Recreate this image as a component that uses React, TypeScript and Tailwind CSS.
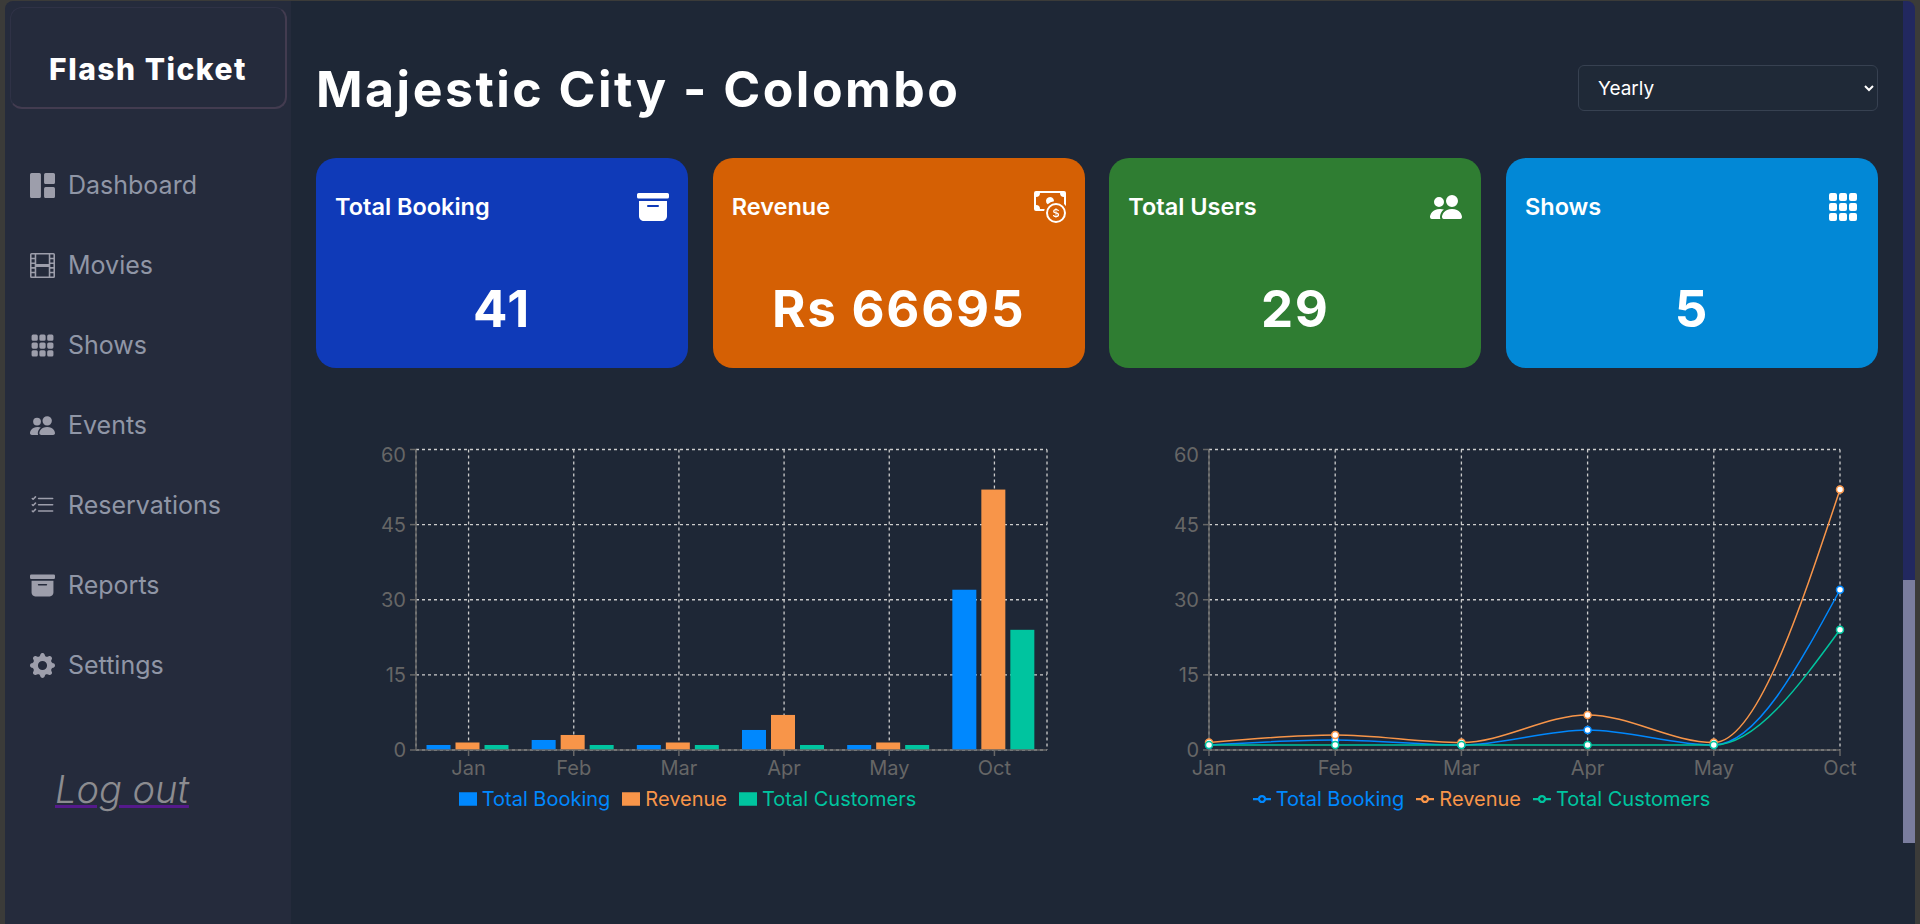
import React from "react";
import {
  BsArchiveFill,
  BsCashCoin,
  BsFilm,
  BsFillGrid1X2Fill,
  BsGearFill,
  BsGrid3X3GapFill,
  BsListCheck,
  BsPeopleFill,
} from "react-icons/bs";

const navItems = [
  { label: "Dashboard", icon: BsFillGrid1X2Fill },
  { label: "Movies", icon: BsFilm },
  { label: "Shows", icon: BsGrid3X3GapFill },
  { label: "Events", icon: BsPeopleFill },
  { label: "Reservations", icon: BsListCheck },
  { label: "Reports", icon: BsArchiveFill },
  { label: "Settings", icon: BsGearFill },
];

const cards = [
  { title: "Total Booking", value: "41", icon: BsArchiveFill, bg: "bg-[#0f3ab8]" },
  { title: "Revenue", value: "Rs 66695", icon: BsCashCoin, bg: "bg-[#d56004]" },
  { title: "Total Users", value: "29", icon: BsPeopleFill, bg: "bg-[#2f7d32]" },
  { title: "Shows", value: "5", icon: BsGrid3X3GapFill, bg: "bg-[#0288d6]" },
];

const months = ["Jan", "Feb", "Mar", "Apr", "May", "Oct"];
const series = [
  { name: "Total Booking", color: "#0088fe", text: "text-[#0088fe]", data: [1, 2, 1, 4, 1, 32] },
  { name: "Revenue", color: "#f89549", text: "text-[#f89549]", data: [1.5, 3, 1.5, 7, 1.5, 52] },
  { name: "Total Customers", color: "#00c49f", text: "text-[#00c49f]", data: [1, 1, 1, 1, 1, 24] },
];

const TOP = 19.5;
const BOTTOM = 320;
const yTicks = [60, 45, 30, 15, 0];
const yOf = (v: number) => BOTTOM - (v / 60) * (BOTTOM - TOP);

// same curve as d3 curveMonotoneX
function monotonePath(pts: [number, number][]) {
  const n = pts.length;
  const slopes: number[] = [];
  for (let i = 0; i < n - 1; i++) {
    slopes.push((pts[i + 1][1] - pts[i][1]) / (pts[i + 1][0] - pts[i][0]));
  }
  const t: number[] = new Array(n).fill(0);
  for (let i = 1; i < n - 1; i++) {
    const s0 = slopes[i - 1];
    const s1 = slopes[i];
    const p = (s0 + s1) / 2;
    t[i] = (Math.sign(s0) + Math.sign(s1)) * Math.min(Math.abs(s0), Math.abs(s1), 0.5 * Math.abs(p)) || 0;
  }
  t[0] = (3 * slopes[0] - t[1]) / 2;
  t[n - 1] = (3 * slopes[n - 2] - t[n - 2]) / 2;
  let d = `M${pts[0][0]},${pts[0][1]}`;
  for (let i = 0; i < n - 1; i++) {
    const dx = (pts[i + 1][0] - pts[i][0]) / 3;
    d += `C${pts[i][0] + dx},${pts[i][1] + dx * t[i]},${pts[i + 1][0] - dx},${pts[i + 1][1] - dx * t[i + 1]},${pts[i + 1][0]},${pts[i + 1][1]}`;
  }
  return d;
}

const GRID_STROKE = "#ccc";
const GRID_WIDTH = 1.3;

function YGrid({ left, right }: { left: number; right: number }) {
  return (
    <g>
      {yTicks.map((v) => (
        <line
          key={v}
          x1={left}
          x2={right}
          y1={yOf(v)}
          y2={yOf(v)}
          stroke={GRID_STROKE}
          strokeWidth={GRID_WIDTH}
          strokeDasharray="3 3"
        />
      ))}
    </g>
  );
}

function XGrid({ xs }: { xs: number[] }) {
  return (
    <g>
      {xs.map((x) => (
        <line
          key={x}
          x1={x}
          x2={x}
          y1={TOP}
          y2={BOTTOM}
          stroke={GRID_STROKE}
          strokeWidth={GRID_WIDTH}
          strokeDasharray="3 3"
        />
      ))}
    </g>
  );
}

function AxisLines({ left, right, xs }: { left: number; right: number; xs: number[] }) {
  return (
    <g stroke="#666" fill="#666" fontSize={20} strokeWidth={1.5}>
      <line x1={left} x2={left} y1={TOP} y2={BOTTOM} />
      <line x1={left} x2={right} y1={BOTTOM} y2={BOTTOM} />
      {yTicks.map((v) => (
        <g key={v}>
          <line x1={left - 6} x2={left} y1={yOf(v)} y2={yOf(v)} />
          <text x={left - 10} y={yOf(v) + (v === 60 ? 12 : 7)} textAnchor="end" stroke="none">
            {v}
          </text>
        </g>
      ))}
      {xs.map((x, i) => (
        <g key={months[i]}>
          <line x1={x} x2={x} y1={BOTTOM} y2={BOTTOM + 6} />
          <text x={x} y={345} textAnchor="middle" stroke="none">
            {months[i]}
          </text>
        </g>
      ))}
    </g>
  );
}

function BarPlot() {
  const left = 100;
  const right = 731;
  const band = (right - left) / 6;
  const xs = months.map((_, i) => left + band * (i + 0.5));
  return (
    <svg width={781} height={357} className="block">
      <YGrid left={left} right={right} />
      <XGrid xs={[left, ...xs, right]} />
      {series.map((s, si) =>
        s.data.map((v, i) => (
          <rect
            key={s.name + i}
            x={left + band * i + 10.5 + si * 29}
            y={yOf(v)}
            width={24}
            height={BOTTOM - yOf(v)}
            fill={s.color}
          />
        )),
      )}
      <AxisLines left={left} right={right} xs={xs} />
    </svg>
  );
}

function LinePlot() {
  const left = 112;
  const right = 743;
  const step = (right - left) / 5;
  const xs = months.map((_, i) => left + step * i);
  return (
    <svg width={781} height={357} className="block">
      <YGrid left={left} right={right} />
      <XGrid xs={xs} />
      <AxisLines left={left} right={right} xs={xs} />
      {series.map((s) => (
        <path
          key={s.name}
          d={monotonePath(s.data.map((v, i) => [xs[i], yOf(v)]))}
          fill="none"
          stroke={s.color}
          strokeWidth={1.5}
        />
      ))}
      {series.map((s) =>
        s.data.map((v, i) => (
          <circle key={s.name + i} cx={xs[i]} cy={yOf(v)} r={3.5} fill="#fff" stroke={s.color} strokeWidth={1.5} />
        )),
      )}
    </svg>
  );
}

function Legend({ line, className }: { line?: boolean; className: string }) {
  return (
    <div className={`flex h-[24px] items-center justify-center gap-[12px] text-[20px] ${className}`}>
      {series.map((s) => (
        <div key={s.name} className={`flex items-center gap-[5px] ${s.text}`}>
          <svg width={18} height={18} viewBox="0 0 32 32">
            {line ? (
              <path
                d="M0,16h10.67A5.33,5.33,0,1,1,21.33,16H32M21.33,16A5.33,5.33,0,1,1,10.67,16"
                fill="none"
                stroke={s.color}
                strokeWidth={4}
              />
            ) : (
              <path d="M0,4h32v24h-32z" fill={s.color} />
            )}
          </svg>
          <span>{s.name}</span>
        </div>
      ))}
    </div>
  );
}

export default function App() {
  return (
    <div className="h-screen w-full overflow-hidden bg-[#3b3b39] pl-[5px] pr-[5px] pt-[1px] font-[Inter,sans-serif]">
      <div className="flex h-full overflow-hidden rounded-t-lg">
        {/* Sidebar */}
        <aside className="flex w-[286px] shrink-0 flex-col bg-[#252b3c] pl-[5px] pt-[6px]">
          <div className="flex h-[102px] w-[277px] items-center justify-center rounded-xl border border-[#2f3246] border-r-2 border-b-2 border-r-[#433c50] border-b-[#433c50] pt-[24px]">
            <span className="text-[30px] font-extrabold tracking-[0.05em] text-white">Flash Ticket</span>
          </div>
          <nav className="mt-[36px] flex flex-col">
            {navItems.map((item) => (
              <div key={item.label} className="flex h-[80px] items-center gap-[13px] pl-[20px]">
                <item.icon size={25} className="text-[#9d9eab]" />
                <span className="pt-[1px] text-[25px] text-[#9096a6]">{item.label}</span>
              </div>
            ))}
          </nav>
          <a className="mt-[57px] self-start pl-[45px] text-[38px] font-light italic leading-[54px] text-[#8c8c90] underline decoration-[#551a8b] decoration-[3px]">
            Log out
          </a>
        </aside>

        {/* Main */}
        <main className="flex-1 bg-[#1e2736] px-[25px] pt-[51px]">
          <div className="flex h-[72px] items-center justify-between">
            <h1 className="mt-[3px] text-[50px] font-bold tracking-[0.05em] text-white">Majestic City - Colombo</h1>
            <select className="h-[46px] w-[300px] rounded-md border border-[#374151] bg-[#1f2937] pl-[15px] text-[19px] text-white">
              <option>Yearly</option>
            </select>
          </div>

          <div className="mt-[34px] grid grid-cols-4 gap-[24.67px]">
            {cards.map((c) => (
              <div key={c.title} className={`flex h-[210px] flex-col rounded-[20px] px-[19px] pt-[33px] text-white ${c.bg}`}>
                <div className="flex h-[32px] items-center justify-between">
                  <span className="text-[23.5px] font-semibold">{c.title}</span>
                  <c.icon size={32} />
                </div>
                <div className="mt-[54px] text-center text-[51px] font-bold leading-[64px] tracking-[0.035em]">
                  {c.value}
                </div>
              </div>
            ))}
          </div>

          <div className="mt-[62px] grid grid-cols-2">
            <div>
              <BarPlot />
              <Legend className="pr-[38px]" />
            </div>
            <div>
              <LinePlot />
              <Legend line className="pr-[12px]" />
            </div>
          </div>
        </main>

        {/* Scrollbar */}
        <div className="flex w-[12px] shrink-0 flex-col">
          <div className="h-[579px] bg-[#22285f]" />
          <div className="h-[263px] bg-[#7a7d9e]" />
          <div className="flex-1 bg-[#1e2736]" />
        </div>
      </div>
    </div>
  );
}
